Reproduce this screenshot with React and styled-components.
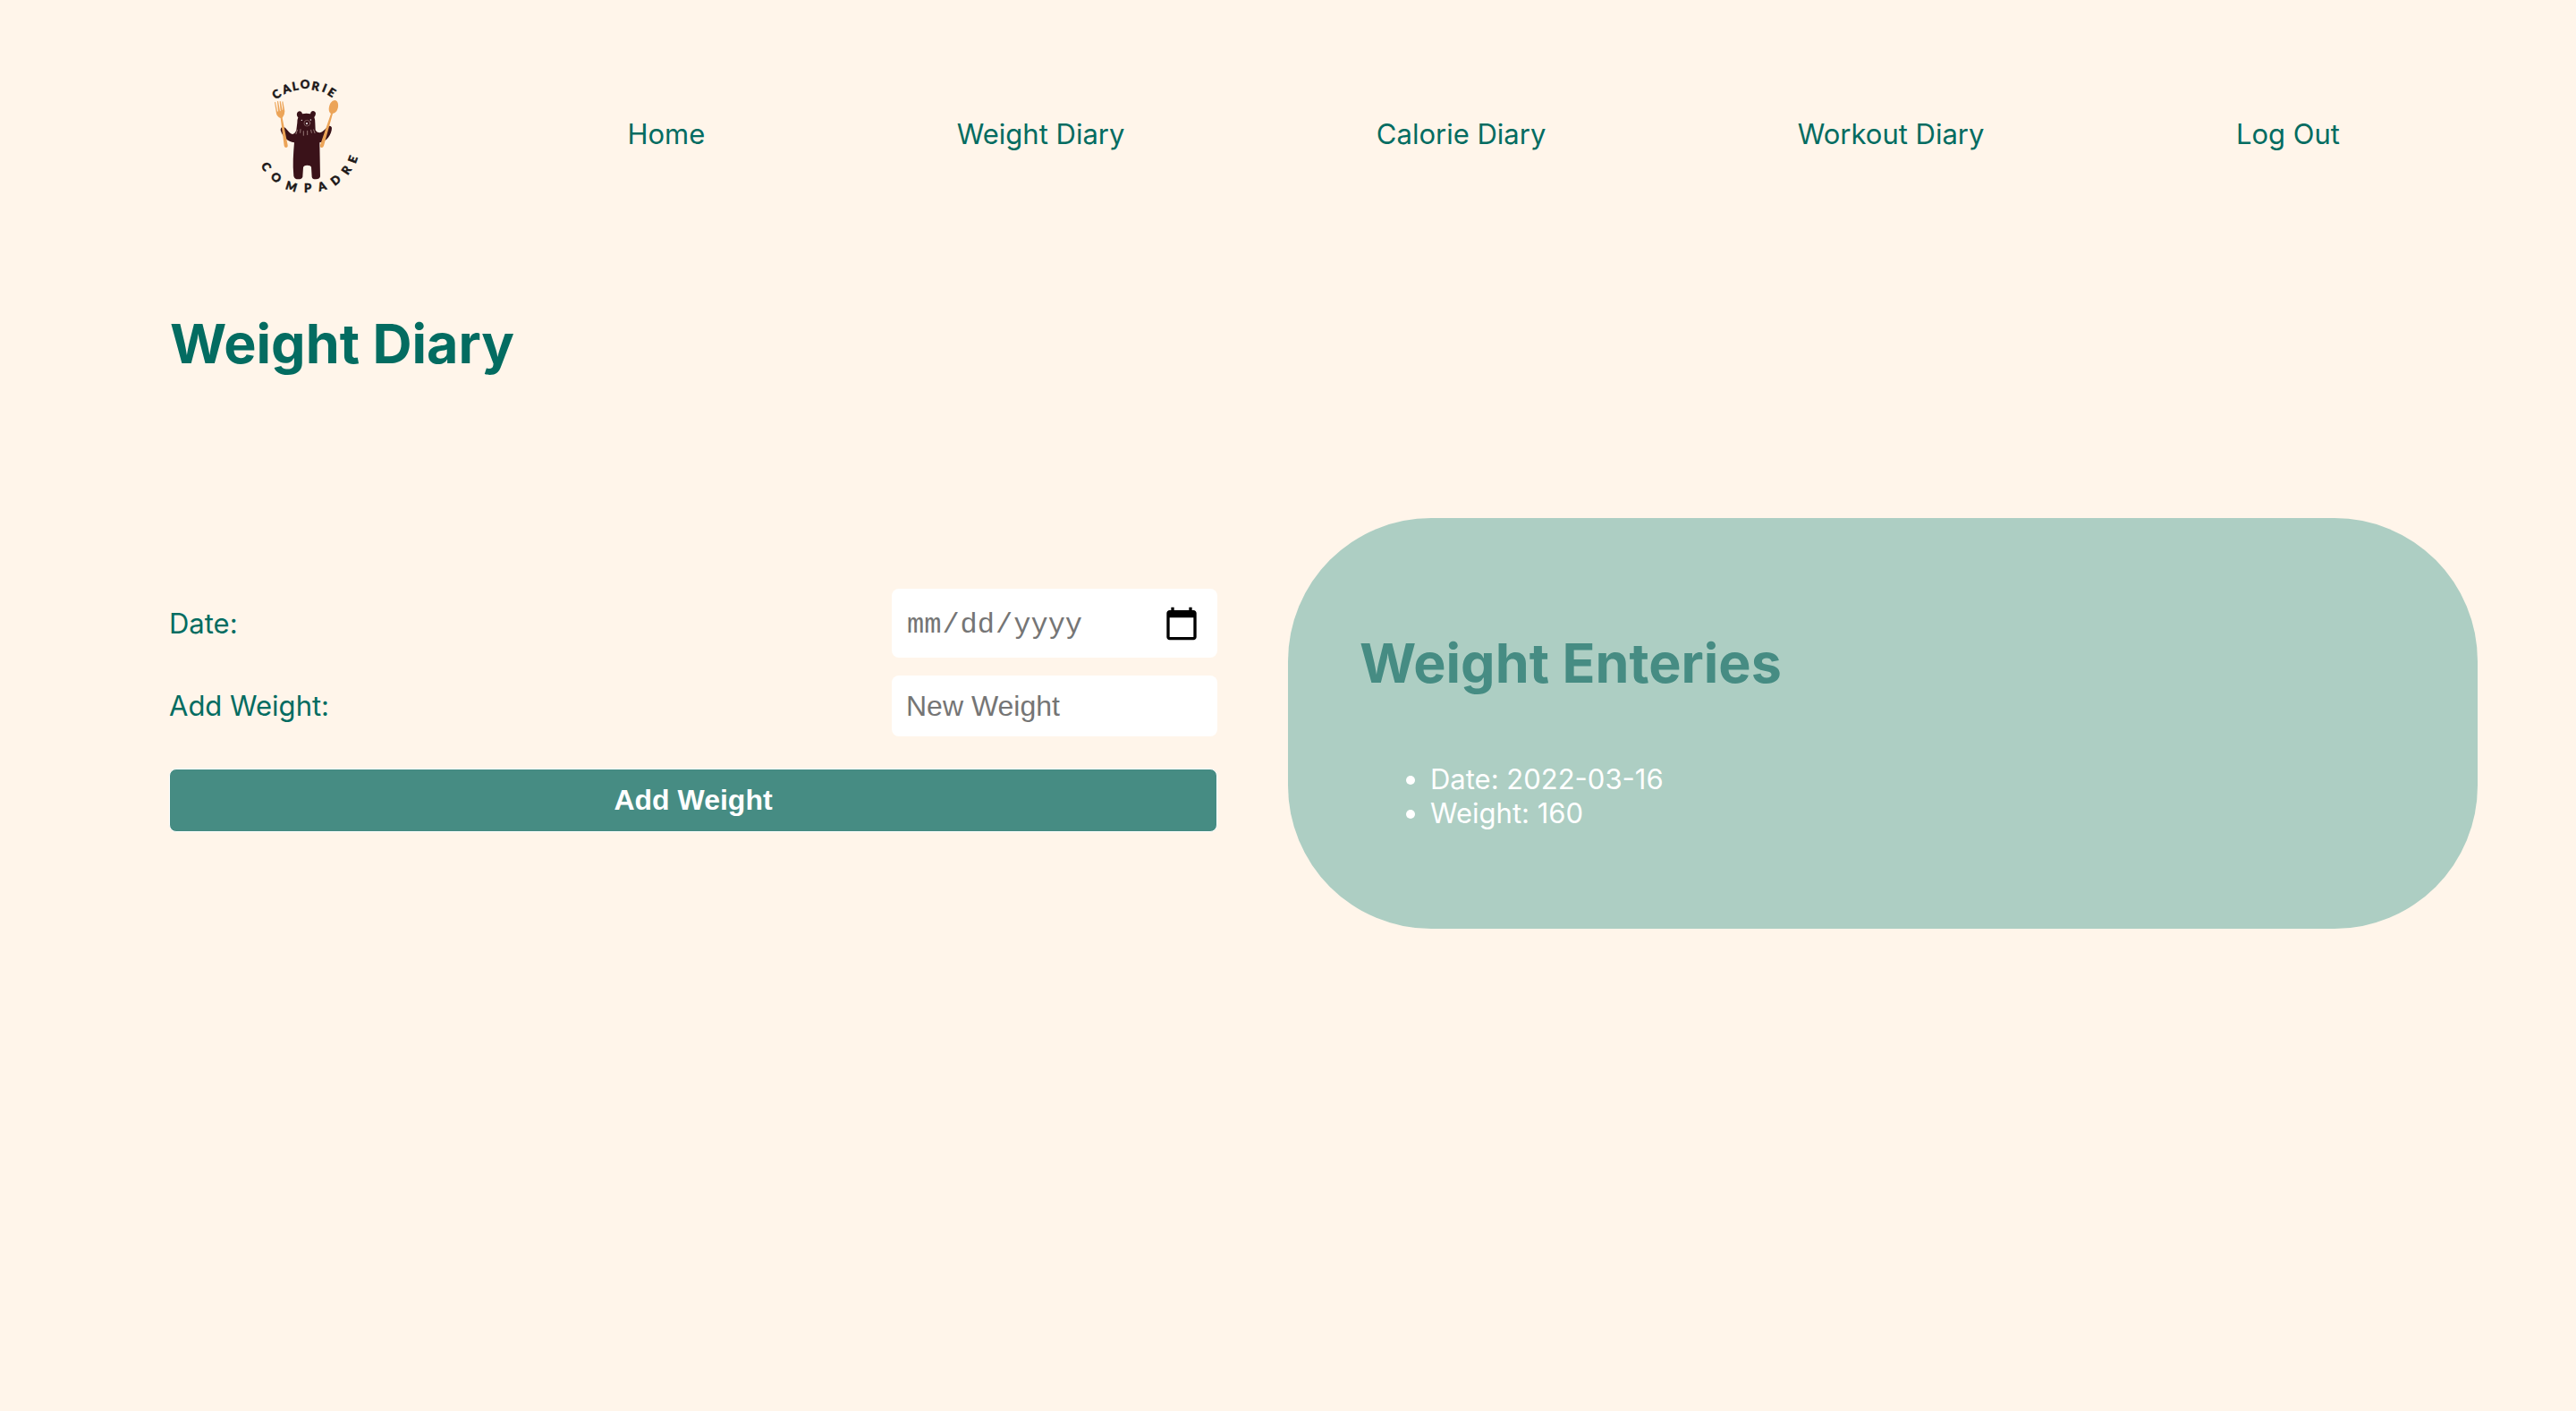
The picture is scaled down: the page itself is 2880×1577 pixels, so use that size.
import React from "react";
import styled, { createGlobalStyle } from "styled-components";

const GlobalStyle = createGlobalStyle`
  *, *::before, *::after { box-sizing: border-box; }
  body {
    margin: 0;
    background: #fff5ea;
    color: #036c61;
    font-family: Inter, "Liberation Sans", sans-serif;
    font-size: 31px;
    line-height: 38px;
  }
`;

const NavBar = styled.nav`
  display: flex;
  align-items: center;
  justify-content: space-between;
  padding: 72px 264px 0;
`;

const NavLink = styled.a`
  color: inherit;
  text-decoration: none;
`;

const LogoArt = styled.svg`
  display: block;
  width: 156px;
  height: 156px;
`;

const LogoLetter = styled.text`
  fill: #1b1718;
  stroke: #1b1718;
  stroke-width: 0.5px;
  font-family: Lato, sans-serif;
  font-size: 13px;
  font-weight: 900;
  text-anchor: middle;
`;

const Title = styled.h1`
  margin: 0;
  font-size: 61px;
  line-height: 76px;
  font-weight: 700;
  color: ${(p) => p.$tone || "inherit"};
`;

const PageHeader = styled.header`
  padding: 118px 190px 0;
`;

const Columns = styled.main`
  display: grid;
  grid-template-columns: 1fr 1fr;
  align-items: start;
  padding-top: 157px;
`;

const Form = styled.form`
  display: flex;
  flex-direction: column;
  gap: 20px;
  padding: 79px 79px 0 189px;
`;

const Field = styled.div`
  display: flex;
  align-items: center;
  justify-content: space-between;
`;

const Input = styled.input`
  width: 364px;
  height: ${(p) => (p.type === "date" ? 77 : 68)}px;
  padding: 0 16px;
  border: 0;
  border-radius: 8px;
  background: #fff;
  color: #757575;
  font-family: ${(p) => (p.type === "date" ? '"Liberation Mono", monospace' : '"Liberation Sans", sans-serif')};
  font-size: 32px;
  &::placeholder { color: #757575; opacity: 1; }
  &::-webkit-datetime-edit { padding-top: 4px; }
  &::-webkit-calendar-picker-indicator {
    width: 40px;
    height: 40px;
    margin-right: 4px;
    padding: 0;
    background-size: 40px 40px;
  }
`;

const SubmitButton = styled.button`
  height: 71px;
  margin-top: 16px;
  border: 1px solid #fff;
  border-radius: 8px;
  background: #468c83;
  color: #fff;
  font-family: "Liberation Sans", sans-serif;
  font-size: 32px;
  font-weight: 700;
`;

const Card = styled.section`
  margin-right: 110px;
  padding: 124px 80px 110px;
  border-radius: 160px;
  background: #adcec3;
`;

const EntryList = styled.ul`
  margin: 73px 0 0;
  padding-left: 79px;
  color: #fff;
`;

const topLetters = [
  ["C", 45, 33, -35], ["A", 56, 27, -20], ["L", 66, 24, -10], ["O", 77, 22, 0],
  ["R", 89, 24, 12], ["I", 99, 26, 22], ["E", 107, 31, 32],
];
const bottomLetters = [
  ["C", 34, 114, 60], ["O", 45, 126, 42], ["M", 62, 136, 17], ["P", 80, 138, 0],
  ["A", 96, 136, -17], ["D", 111, 129, -38], ["R", 123, 118, -56], ["E", 130, 106, -70],
];

function Logo() {
  return (
    <LogoArt viewBox="0 0 156 156" role="img" aria-label="Calorie Compadre">
      {[...topLetters, ...bottomLetters].map(([ch, x, y, angle], i) => (
        <LogoLetter key={i} y="5" transform={`translate(${x} ${y}) rotate(${angle})`}>
          {ch}
        </LogoLetter>
      ))}
      <g transform="translate(6 -2) scale(.3333)">
        <path
          fill="#3a1219"
          d="M190 184C182 176 186 163 195 163Q202 163 204 172Q218 169 231 172C233 158 247 160 249 170Q249 176 244 183Q247 190 247 202L248 226Q252 235 263 235C276 232 282 219 292 213Q300 210 303 218C303 240 286 266 262 268L264 382Q262 391 250 391Q238 392 236 383L234 350Q232 344 220 344Q208 344 207 352L205 383Q202 391 191 391Q177 391 175 380C171 340 174 304 177 268C155 266 137 248 131 226Q131 215 141 216C153 219 157 237 172 240Q180 238 184 226L187 202Q187 190 190 184Z"
        />
        <g fill="none" stroke="#f3dfd3" strokeWidth="1.5" strokeLinecap="round">
          <circle cx="220" cy="203" r="10" strokeWidth="1" />
          <path d="M187 226l-4 13M198 224l-1 11M208 230v14M221 229v13M233 226l2 9M242 225l4 11" />
        </g>
        <g fill="#fff">
          <circle cx="202" cy="193" r="2" />
          <circle cx="232" cy="192" r="2" />
          <circle cx="219" cy="204" r="3" />
        </g>
        <g fill="#eca458">
          <path d="M111 133l3-1 6 31 3 1-3-34 3-1 6 34 2-1-3-32 3-1 6 30 2-1-3-27 3-1 6 33Q145 177 137 185L155 277Q156 285 149 285Q143 284 143 278L131 186Q120 182 117 171Z" />
          <path d="M313 126C327 128 327 150 319 163Q314 170 306 171L276 279Q273 287 267 285Q262 283 264 276L300 171C290 165 292 146 299 135Q305 126 313 126Z" />
        </g>
      </g>
    </LogoArt>
  );
}

const links = ["Home", "Weight Diary", "Calorie Diary", "Workout Diary", "Log Out"];

export default function App() {
  return (
    <>
      <GlobalStyle />
      <NavBar>
        <Logo />
        {links.map((label) => (
          <NavLink key={label} href="#">{label}</NavLink>
        ))}
      </NavBar>
      <PageHeader>
        <Title>Weight Diary</Title>
      </PageHeader>
      <Columns>
        <Form onSubmit={(e) => e.preventDefault()}>
          <Field>
            <label htmlFor="date">Date:</label>
            <Input id="date" type="date" />
          </Field>
          <Field>
            <label htmlFor="weight">Add Weight:</label>
            <Input id="weight" type="text" placeholder="New Weight" />
          </Field>
          <SubmitButton type="submit">Add Weight</SubmitButton>
        </Form>
        <Card>
          <Title as="h2" $tone="#468c83">Weight Enteries</Title>
          <EntryList>
            <li>Date: 2022-03-16</li>
            <li>Weight: 160</li>
          </EntryList>
        </Card>
      </Columns>
    </>
  );
}
